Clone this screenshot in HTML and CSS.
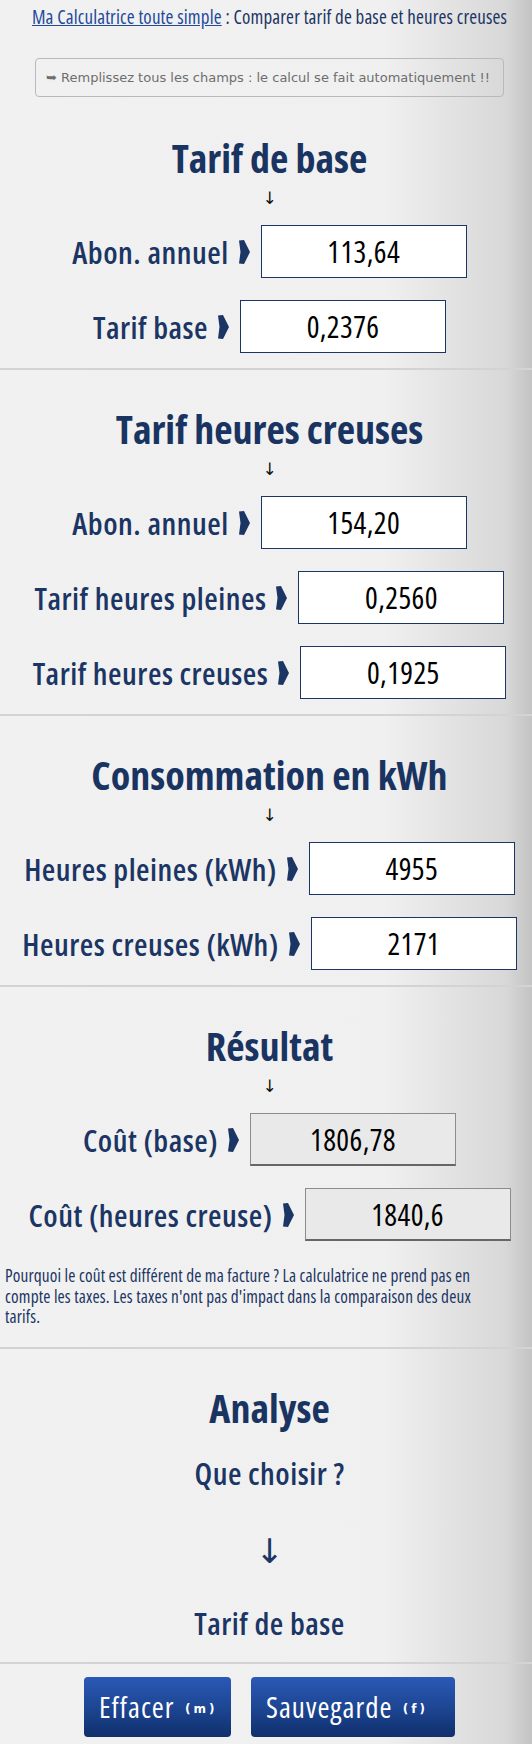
FILE: index.html
```html
<!DOCTYPE html>
<html lang="fr">
<head>
<meta charset="utf-8">
<title>Ma Calculatrice toute simple</title>
<link rel="stylesheet" href="styles.css">
</head>
<body>
<header class="top">
  <p class="crumb"><a href="#" class="crumb-link">Ma Calculatrice toute simple</a> : Comparer tarif de base et heures creuses</p>
  <div class="notice">&#10149; Remplissez tous les champs : le calcul se fait automatiquement !!</div>
</header>

<section class="block first">
  <h2 class="title">Tarif de base</h2>
  <div class="down">↓</div>
  <div class="row">
    <label class="lab">Abon. annuel <svg class="pt" viewBox="0 0 11 24"><path d="M0 0.5 L5 0 L11 12 L5 24 L0 23.5 L1.5 12 Z"/></svg></label>
    <div class="field">113,64</div>
  </div>
  <div class="row">
    <label class="lab">Tarif base <svg class="pt" viewBox="0 0 11 24"><path d="M0 0.5 L5 0 L11 12 L5 24 L0 23.5 L1.5 12 Z"/></svg></label>
    <div class="field">0,2376</div>
  </div>
</section>

<section class="block">
  <h2 class="title">Tarif heures creuses</h2>
  <div class="down">↓</div>
  <div class="row">
    <label class="lab">Abon. annuel <svg class="pt" viewBox="0 0 11 24"><path d="M0 0.5 L5 0 L11 12 L5 24 L0 23.5 L1.5 12 Z"/></svg></label>
    <div class="field">154,20</div>
  </div>
  <div class="row">
    <label class="lab">Tarif heures pleines <svg class="pt" viewBox="0 0 11 24"><path d="M0 0.5 L5 0 L11 12 L5 24 L0 23.5 L1.5 12 Z"/></svg></label>
    <div class="field">0,2560</div>
  </div>
  <div class="row">
    <label class="lab">Tarif heures creuses <svg class="pt" viewBox="0 0 11 24"><path d="M0 0.5 L5 0 L11 12 L5 24 L0 23.5 L1.5 12 Z"/></svg></label>
    <div class="field">0,1925</div>
  </div>
</section>

<section class="block">
  <h2 class="title">Consommation en kWh</h2>
  <div class="down">↓</div>
  <div class="row">
    <label class="lab">Heures pleines (kWh) <svg class="pt" viewBox="0 0 11 24"><path d="M0 0.5 L5 0 L11 12 L5 24 L0 23.5 L1.5 12 Z"/></svg></label>
    <div class="field">4955</div>
  </div>
  <div class="row">
    <label class="lab">Heures creuses (kWh) <svg class="pt" viewBox="0 0 11 24"><path d="M0 0.5 L5 0 L11 12 L5 24 L0 23.5 L1.5 12 Z"/></svg></label>
    <div class="field">2171</div>
  </div>
</section>

<section class="block">
  <h2 class="title">Résultat</h2>
  <div class="down">↓</div>
  <div class="row">
    <label class="lab">Coût (base) <svg class="pt" viewBox="0 0 11 24"><path d="M0 0.5 L5 0 L11 12 L5 24 L0 23.5 L1.5 12 Z"/></svg></label>
    <div class="field out">1806,78</div>
  </div>
  <div class="row">
    <label class="lab">Coût (heures creuse) <svg class="pt" viewBox="0 0 11 24"><path d="M0 0.5 L5 0 L11 12 L5 24 L0 23.5 L1.5 12 Z"/></svg></label>
    <div class="field out">1840,6</div>
  </div>
  <p class="note">Pourquoi le coût est différent de ma facture ? La calculatrice ne prend pas en compte les taxes. Les taxes n'ont pas d'impact dans la comparaison des deux tarifs.</p>
</section>

<section class="block">
  <h2 class="title">Analyse</h2>
  <p class="ask">Que choisir ?</p>
  <div class="bigdown">↓</div>
  <p class="verdict">Tarif de base</p>
</section>

<section class="block actions">
  <button class="btn btn-clear" type="button">Effacer <span class="key">(m)</span></button>
  <button class="btn btn-save" type="button">Sauvegarde <span class="key">(f)</span></button>
</section>
</body>
</html>
```

FILE: styles.css
```css
html {
  overflow-x: hidden;
}
body {
  margin: 0;
  min-height: 1744px;
  background: linear-gradient(90deg, #f1f1f1 0%, #f0f0f0 72%, #d8d8d8 95%, #c3c3c3 100%);
  font-family: "Open Sans", "DejaVu Sans Condensed", sans-serif;
  font-stretch: 75%;
  color: #1b3564;
}

.top {
  padding-left: 7px;
}
.crumb {
  margin: 5px 0 0;
  font-size: 19px;
  letter-spacing: 0.15px;
  line-height: 24px;
  text-align: center;
  color: #1b3564;
  white-space: nowrap;
}
.crumb-link {
  color: #1f4a9c;
  text-decoration: underline;
}
.notice {
  width: 447px;
  margin: 29px auto 0;
  padding: 10px 10px;
  border: 1px solid #b9b9b9;
  border-radius: 4px;
  font-family: "DejaVu Sans", Verdana, sans-serif;
  font-stretch: 100%;
  font-size: 13px;
  line-height: 17px;
  color: #6e6e6e;
  white-space: nowrap;
}

.block {
  padding: 34px 0 15px 7px;
  border-top: 2px solid #d3d3d3;
}
.block.first {
  border-top: 0;
  padding-top: 36px;
}

.title {
  margin: 0;
  font-size: 40px;
  line-height: 50px;
  font-weight: 700;
  text-align: center;
  color: #1a3462;
}
.down {
  margin-top: 5px;
  font-family: "DejaVu Sans", sans-serif;
  font-stretch: 100%;
  font-size: 17px;
  line-height: 20px;
  text-align: center;
  color: #111;
}

.row {
  display: flex;
  justify-content: center;
  align-items: center;
  gap: 11px;
  margin-top: 22px;
}
.down + .row {
  margin-top: 17px;
}
.lab {
  display: flex;
  align-items: center;
  gap: 10px;
  font-weight: 600;
  font-size: 31px;
  letter-spacing: 0.5px;
  line-height: 36px;
  color: #1b3564;
  white-space: nowrap;
}
.pt {
  width: 11px;
  height: 24px;
  fill: #1b3564;
}
.field {
  box-sizing: border-box;
  width: 206px;
  height: 53px;
  display: flex;
  align-items: center;
  justify-content: center;
  background: #ffffff;
  border: 1.5px solid #1b3564;
  font-weight: 500;
  font-size: 30px;
  color: #000;
  letter-spacing: 0.4px;
}
.field.out {
  background: #e9e9e9;
  border: 1px solid #8c8c8c;
  border-bottom: 2px solid #666;
}

.note {
  margin: 25px 27px 4px -2px;
  font-weight: 500;
  font-size: 17.3px;
  letter-spacing: 0.15px;
  line-height: 20.5px;
  color: #1b3564;
}

.ask {
  margin: 22px 0 0;
  font-weight: 600;
  font-size: 31px;
  letter-spacing: 0.5px;
  line-height: 36px;
  text-align: center;
}
.bigdown {
  margin-top: 40px;
  font-family: "DejaVu Sans", sans-serif;
  font-stretch: 100%;
  font-size: 34px;
  line-height: 40px;
  text-align: center;
  color: #1b3564;
}
.verdict {
  margin: 34px 0 6px;
  font-weight: 600;
  font-size: 31px;
  letter-spacing: 0.5px;
  line-height: 36px;
  text-align: center;
}

.actions {
  display: flex;
  justify-content: center;
  gap: 20px;
  padding-top: 13px;
}
.btn {
  display: inline-flex;
  align-items: center;
  height: 60px;
  padding: 0 0 0 15px;
  border: 0;
  border-radius: 4px;
  background: linear-gradient(180deg, #2a59b6 0%, #1c4490 55%, #102f6c 100%);
  color: #fff;
  font-family: "Open Sans", "DejaVu Sans Condensed", sans-serif;
  font-stretch: 75%;
  font-weight: 500;
  font-size: 29px;
  letter-spacing: 1px;
  white-space: pre;
}
.btn-clear {
  width: 147px;
}
.btn-save {
  width: 204px;
}
.key {
  margin-left: 4px;
  font-family: "DejaVu Sans", sans-serif;
  font-stretch: 100%;
  font-size: 12px;
  font-weight: 700;
  letter-spacing: 3px;
  position: relative;
  top: 2px;
}
```
